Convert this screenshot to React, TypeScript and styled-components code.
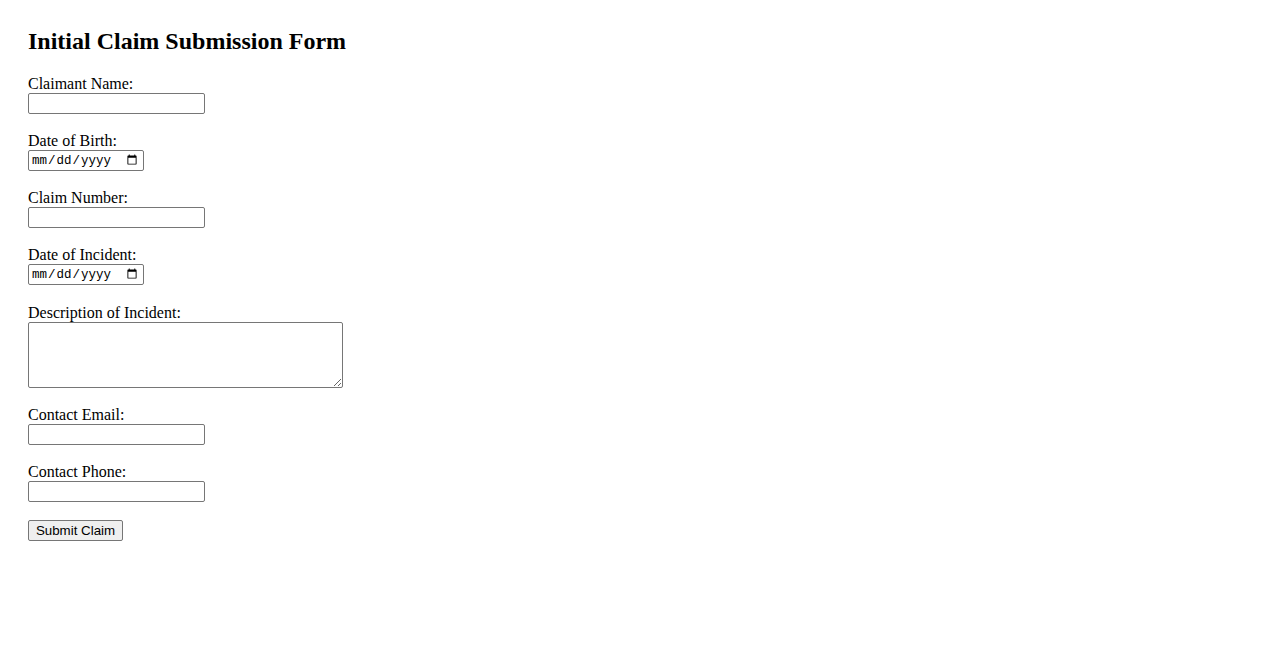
import React from 'react';
import styled, { createGlobalStyle } from 'styled-components';

const GlobalStyle = createGlobalStyle`
	body {
		margin: 0;
		background: #fff;
		color: #000;
		font-family: 'Liberation Serif', 'Times New Roman', serif;
	}
`;

const Page = styled.div`
	padding: 28px;
`;

const Title = styled.h2`
	margin: 0 0 20px;
	font-family: 'Liberation Serif', 'Times New Roman', serif;
	font-size: 24px;
	font-weight: bold;
	line-height: 27px;
`;

const Form = styled.form`
	display: flex;
	flex-direction: column;
	align-items: flex-start;
	gap: 18px;
`;

const Field = styled.div<{ $offset?: number }>`
	display: flex;
	flex-direction: column;
	align-items: flex-start;
	margin-top: ${({ $offset }) => $offset ?? 0}px;
`;

const Label = styled.label`
	font-size: 16px;
	line-height: 18px;
`;

const Input = styled.input<{ $width?: number }>`
	box-sizing: border-box;
	width: ${({ $width }) => $width ?? 177}px;
	height: 21px;
	margin: 0;
	padding: 1px 2px;
	border: 1px solid #767676;
	border-radius: 2px;
	background: #fff;
	font-family: 'Liberation Sans', Arial, sans-serif;
	font-size: 13.33px;

	&[type='date'] {
		font-family: 'Liberation Mono', 'Courier New', monospace;
		font-size: 12.5px;
		padding: 0 3px 0 2px;
	}
`;

const TextArea = styled.textarea`
	box-sizing: border-box;
	width: 315px;
	height: 66px;
	margin: 0;
	padding: 2px;
	border: 1px solid #767676;
	border-radius: 2px;
	font-family: 'Liberation Mono', monospace;
	font-size: 13.33px;
`;

const Button = styled.button`
	box-sizing: border-box;
	width: 95px;
	height: 21px;
	margin: 0;
	padding: 0 6px;
	border: 1px solid #767676;
	border-radius: 2px;
	background: #efefef;
	color: #000;
	font-family: 'Liberation Sans', Arial, sans-serif;
	font-size: 13.33px;
`;

export default function App() {
	return (
		<>
			<GlobalStyle />
			<Page>
				<Title>Initial Claim Submission Form</Title>
				<Form onSubmit={(e) => e.preventDefault()}>
					<Field>
						<Label htmlFor='name'>Claimant Name:</Label>
						<Input id='name' type='text' />
					</Field>
					<Field>
						<Label htmlFor='dob'>Date of Birth:</Label>
						<Input id='dob' type='date' $width={116} />
					</Field>
					<Field>
						<Label htmlFor='claim'>Claim Number:</Label>
						<Input id='claim' type='text' />
					</Field>
					<Field>
						<Label htmlFor='doi'>Date of Incident:</Label>
						<Input id='doi' type='date' $width={116} />
					</Field>
					<Field $offset={1}>
						<Label htmlFor='desc'>Description of Incident:</Label>
						<TextArea id='desc' />
					</Field>
					<Field>
						<Label htmlFor='email'>Contact Email:</Label>
						<Input id='email' type='email' />
					</Field>
					<Field>
						<Label htmlFor='phone'>Contact Phone:</Label>
						<Input id='phone' type='tel' />
					</Field>
					<Button type='submit'>Submit Claim</Button>
				</Form>
			</Page>
		</>
	);
}
